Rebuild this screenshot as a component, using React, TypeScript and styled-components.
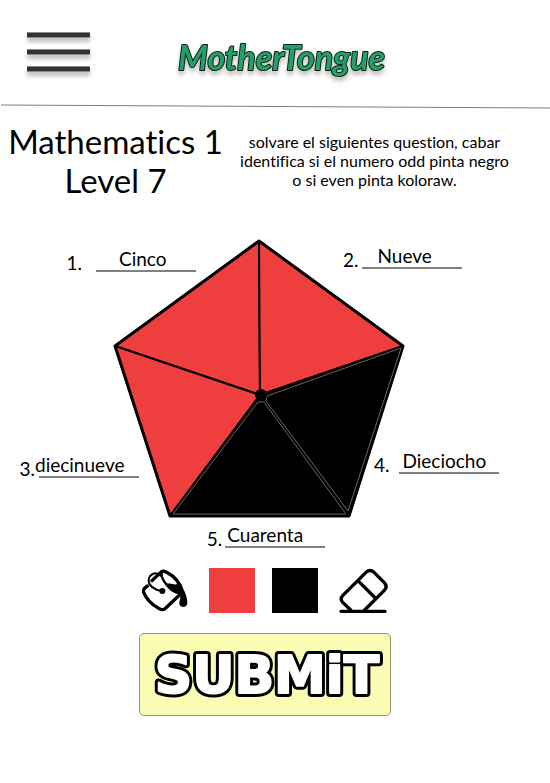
import React, { useState } from "react";
import styled, { createGlobalStyle } from "styled-components";

const RED = "#ee3e3e";
const BLACK = "#000000";

const GlobalStyle = createGlobalStyle`
  *, *::before, *::after { box-sizing: border-box; }
  body {
    margin: 0;
    background: #ffffff;
    color: #000000;
    font-family: Lato, "Open Sans", sans-serif;
    font-variant-ligatures: none;
  }
`;

const Page = styled.div`
  display: flex;
  flex-direction: column;
  padding-bottom: 24px;
`;

const Header = styled.header`
  display: grid;
  grid-template-columns: 1fr auto 1fr;
  align-items: center;
  height: 104px;
  padding: 0 17px 0 27px;
`;

const MenuButton = styled.button`
  display: flex;
  flex-direction: column;
  justify-self: start;
  gap: 11px;
  width: 63px;
  padding: 0;
  border: 0;
  background: none;
  cursor: pointer;
`;

const MenuBar = styled.span`
  height: 6px;
  border: solid #8a8a8a;
  border-width: 1px 0;
  background: #333333;
  box-shadow: 0 4px 4px rgba(0, 0, 0, 0.25);
`;

const LogoLink = styled.a`
  display: block;
  line-height: 0;
  padding-top: 16px;
`;

const LogoArt = styled.svg`
  overflow: visible;
  filter: drop-shadow(0 4px 2px rgba(0, 0, 0, 0.25));
`;

const LogoText = styled.text`
  font: italic 700 34px Lato, sans-serif;
  fill: #239f68;
  stroke: #0c1f16;
  stroke-width: 2px;
  stroke-linejoin: round;
  paint-order: stroke;
`;

const Divider = styled.svg`
  display: block;
  width: 100%;
  height: 5px;
`;

const Intro = styled.section`
  display: grid;
  grid-template-columns: 231fr 287fr;
  align-items: start;
  padding: 13px 32px 0 0;
`;

const Title = styled.h1`
  margin: 0;
  font-size: 33px;
  font-weight: 400;
  line-height: 39px;
  text-align: center;
`;

const Instructions = styled.p`
  margin: 0;
  padding-top: 10px;
  font-size: 16px;
  line-height: 19px;
  text-align: center;
`;

const Board = styled.main`
  display: grid;
  grid-template-columns: 1fr 1fr;
  grid-template-rows: 141px 141px auto;
  margin-top: 38px;
  padding-right: 32px;
`;

const Pentagon = styled.svg`
  grid-area: 1 / 1 / 3 / 3;
  justify-self: center;
  width: 292px;
  height: 282px;
`;

type Spot = "topLeft" | "topRight" | "bottomLeft" | "bottomRight" | "below";

const spots: Record<Spot, string> = {
  topLeft: "grid-area: 1 / 1; place-self: start end; margin: 6px 63px 0 0;",
  topRight: "grid-area: 1 / 2; place-self: start start; margin: 3px 0 0 84px;",
  bottomLeft: "grid-area: 2 / 1; place-self: end end; margin: 0 120px 42px 0;",
  bottomRight: "grid-area: 2 / 2; place-self: end start; margin: 0 0 46px 115px;",
  below: "grid-area: 3 / 1 / 4 / 3; place-self: start center; padding-left: 14px;",
};

const Answer = styled.label<{ $spot: Spot; $gap: number }>`
  display: flex;
  align-items: flex-end;
  gap: ${(p) => p.$gap}px;
  font-size: 19px;
  line-height: 18px;
  ${(p) => spots[p.$spot]}
`;

const AnswerInput = styled.input<{ $indent: number; $lead: number }>`
  width: ${(p) => 100 + p.$lead}px;
  height: 28px;
  padding: 2px 0 2px ${(p) => p.$indent}px;
  border: 0;
  border-radius: 0;
  background: linear-gradient(#808080, #808080) ${(p) => p.$lead}px 100% / 100px 2px no-repeat;
  color: inherit;
  font: inherit;
`;

const Tools = styled.div`
  display: flex;
  justify-content: center;
  gap: 21px;
  margin-top: 20px;
  padding-right: 20px;
`;

const Swatches = styled.div`
  display: flex;
  gap: 17px;
`;

const ToolButton = styled.button`
  padding: 0;
  border: 0;
  background: none;
  line-height: 0;
  cursor: pointer;
`;

const Swatch = styled.button<{ $color: string }>`
  width: 46px;
  height: 45px;
  padding: 0;
  border: 0;
  background: ${(p) => p.$color};
  cursor: pointer;
`;

const SubmitRow = styled.div`
  display: flex;
  justify-content: center;
  margin-top: 20px;
  padding-right: 20px;
`;

const SubmitButton = styled.button`
  width: 252px;
  height: 83px;
  padding: 0;
  border: 1px solid #94966b;
  border-radius: 5px;
  background: #f9fcb2;
  line-height: 0;
  cursor: pointer;
`;

const BubbleText = styled.text<{ $outline?: boolean }>`
  font: 700 52px "DejaVu Sans", sans-serif;
  text-anchor: middle;
  fill: ${(p) => (p.$outline ? "#000000" : "#ffffff")};
  stroke: ${(p) => (p.$outline ? "#000000" : "#ffffff")};
  stroke-width: ${(p) => (p.$outline ? 8 : 2)}px;
  stroke-linejoin: round;
`;

const answers: {
  n: number; value: string; spot: Spot; gap: number; indent: number; lead: number;
}[] = [
  { n: 1, value: "Cinco", spot: "topLeft", gap: 14, indent: 23, lead: 0 },
  { n: 2, value: "Nueve", spot: "topRight", gap: 3, indent: 16, lead: 0 },
  { n: 3, value: "diecinueve", spot: "bottomLeft", gap: 0, indent: 0, lead: 4 },
  { n: 4, value: "Dieciocho", spot: "bottomRight", gap: 9, indent: 4, lead: 0 },
  { n: 5, value: "Cuarenta", spot: "below", gap: 3, indent: 2, lead: 0 },
];

const slices = [
  { points: "147,157 2,108 146,3", fill: RED },
  { points: "147,157 146,3 290,108", fill: RED },
  { points: "147,157 2,108 57,278", fill: RED },
  { points: "147,157 290,108 236,278", fill: BLACK },
  { points: "147,157 236,278 57,278", fill: BLACK },
];

function BucketIcon() {
  return (
    <svg width="46" height="45" viewBox="36 24 138 135" fill="none" stroke="#000" strokeLinecap="round" strokeLinejoin="round">
      <path d="M52 78Q37 88 41 97Q53 127 86 145Q98 152 105 146L158 96" strokeWidth="10" />
      <path d="M66 62L91 38Q98 30 110 37C135 50 150 68 157 94" strokeWidth="10" />
      <path d="M95 38C93 52 100 64 112 76" strokeWidth="7" />
      <path d="M104 72C120 68 133 76 143 72C160 78 173 110 172 130C170 145 151 144 148 132C148 120 154 110 150 102C135 104 118 92 104 72Z" fill="#000" stroke="none" />
      <path d="M91 47C79 32 58 42 56 60C55 76 72 90 96 93" strokeWidth="6" />
      <circle cx="97" cy="93" r="9" fill="#000" stroke="none" />
    </svg>
  );
}

function EraserIcon() {
  return (
    <svg width="49" height="45" viewBox="235 24 147 135" fill="none" stroke="#000" strokeWidth="10" strokeLinecap="round" strokeLinejoin="round">
      <path d="M270 150L246 127Q237 117 246 107L316 37Q328 26 340 37L371 68Q382 80 371 91L312 150" />
      <path d="M294 64L344 114M241 154H373" />
    </svg>
  );
}

export default function App() {
  const [values, setValues] = useState(answers.map((a) => a.value));

  return (
    <Page>
      <GlobalStyle />
      <Header>
        <MenuButton aria-label="Menu">
          <MenuBar />
          <MenuBar />
          <MenuBar />
        </MenuButton>
        <LogoLink href="#" aria-label="MotherTongue">
          <LogoArt width="204" height="46" viewBox="0 0 204 46">
            <LogoText x="0" y="33">MotherTongue</LogoText>
          </LogoArt>
        </LogoLink>
      </Header>
      <Divider viewBox="0 0 550 5" preserveAspectRatio="none" aria-hidden="true">
        <line x1="1" y1="1" x2="550" y2="4" stroke="#808080" />
      </Divider>
      <Intro>
        <Title>
          Mathematics 1<br />Level 7
        </Title>
        <Instructions>
          solvare el siguientes question, cabar
          <br />
          identifica si el numero odd pinta negro
          <br />o si even pinta koloraw.
        </Instructions>
      </Intro>
      <Board>
        <Pentagon viewBox="0 0 292 282" role="img" aria-label="Pentagon in five slices">
          {slices.map((s) => (
            <polygon key={s.points} points={s.points} fill={s.fill} stroke="#000" strokeWidth="2" strokeLinejoin="round" />
          ))}
          <polygon points="146,3 290,108 236,278 57,278 2,108" fill="none" stroke="#000" strokeWidth="3" strokeLinejoin="round" />
          <g fill="none" stroke="#666" strokeWidth="1">
            <path d="M154 158L288 110L235 273L153 163Z" />
            <path d="M145 164L60 276H233L151 164Z" />
          </g>
          <circle cx="148" cy="157" r="6" />
        </Pentagon>
        {answers.map((a, i) => (
          <Answer key={a.n} $spot={a.spot} $gap={a.gap}>
            {a.n}.
            <AnswerInput
              $indent={a.indent}
              $lead={a.lead}
              value={values[i]}
              onChange={(e) => setValues(values.map((v, j) => (j === i ? e.target.value : v)))}
            />
          </Answer>
        ))}
      </Board>
      <Tools>
        <ToolButton aria-label="Fill">
          <BucketIcon />
        </ToolButton>
        <Swatches>
          <Swatch $color={RED} aria-label="Red" />
          <Swatch $color={BLACK} aria-label="Black" />
        </Swatches>
        <ToolButton aria-label="Erase">
          <EraserIcon />
        </ToolButton>
      </Tools>
      <SubmitRow>
        <SubmitButton aria-label="Submit">
          <svg width="250" height="81" viewBox="0 0 250 81">
            <BubbleText $outline x="127" y="59" aria-hidden="true">SUBMiT</BubbleText>
            <BubbleText x="127" y="59">SUBMiT</BubbleText>
          </svg>
        </SubmitButton>
      </SubmitRow>
    </Page>
  );
}
